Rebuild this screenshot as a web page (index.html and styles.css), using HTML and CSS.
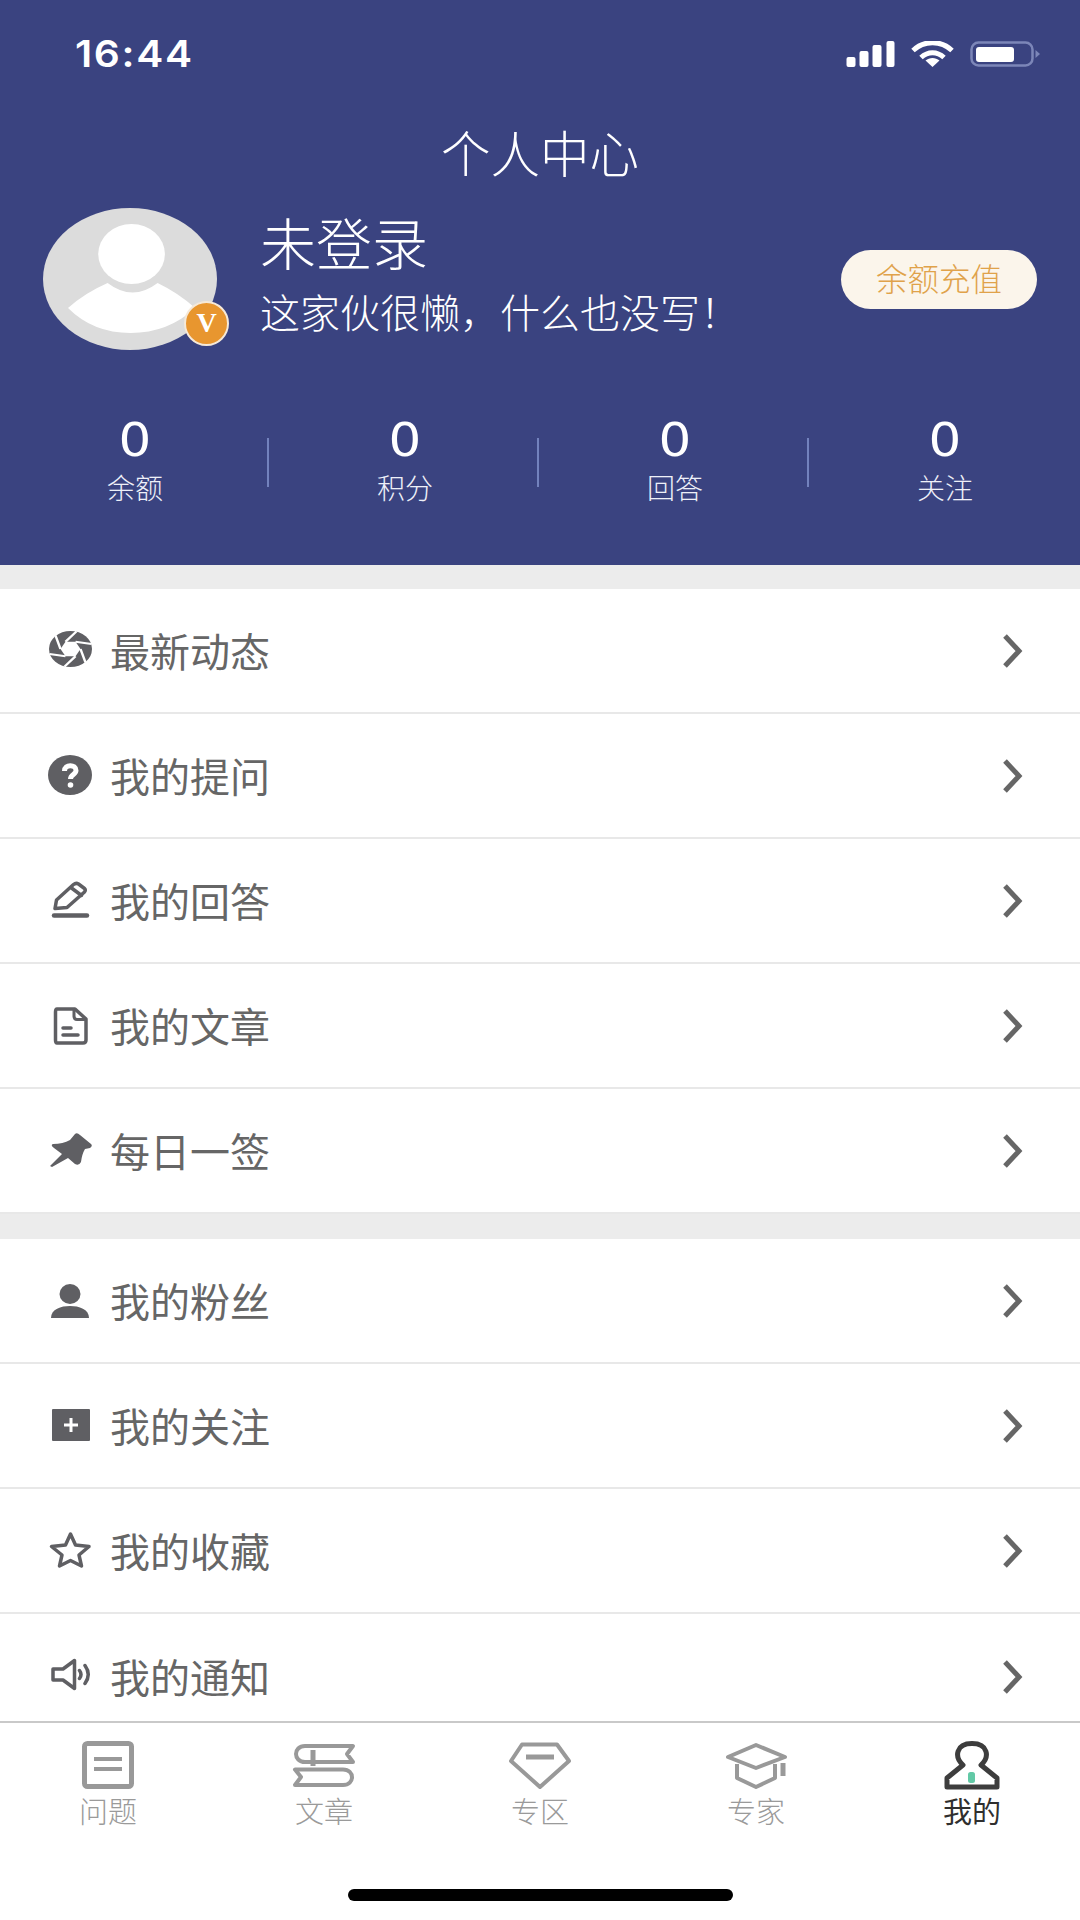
FILE: index.html
```html
<!DOCTYPE html>
<html lang="zh-CN">
<head>
<meta charset="utf-8">
<title>个人中心</title>
<link rel="stylesheet" href="styles.css">
</head>
<body>
<div class="page">
  <header class="hero">
    <div class="status">
      <span class="time">16:44</span>
      <div class="status-icons">
        <svg class="signal" viewBox="0 0 48 26"><rect x="0" y="16" width="9" height="10" rx="2"/><rect x="13" y="10" width="9" height="16" rx="2"/><rect x="26" y="4" width="9" height="22" rx="2"/><rect x="40" y="0" width="8" height="26" rx="2"/></svg>
        <svg class="wifi" viewBox="0 0 43 26"><path d="M2 9.500C13 -1 30 -1 41 9.500" class="wifi-arc"/><path d="M10 16.500C17 10 26 10 33 16.500" class="wifi-arc"/><path d="M21.500 26L14.500 19.500C18.500 16 24.500 16 28.500 19.500Z" class="wifi-dot"/></svg>
        <svg class="battery" viewBox="0 0 70 26"><rect x="1.500" y="1.500" width="61" height="23" rx="7" class="batt-shell"/><rect x="6" y="6" width="38" height="15" rx="3" class="batt-fill"/><path d="M65.500 9L70 13L65.500 17Z" class="batt-nub"/></svg>
      </div>
    </div>
    <h1 class="title">个人中心</h1>
    <div class="profile">
      <div class="avatar">
        <svg class="avatar-img" viewBox="0 0 167 142" preserveAspectRatio="none"><ellipse cx="83.500" cy="71" rx="83.500" ry="71" class="av-bg"/><ellipse cx="85" cy="46" rx="32" ry="30" class="av-fg"/><path d="M24 100Q40 85 62 75Q86 94 110 75Q130 85 146 100Q120 125 84 125Q48 125 24 100Z" class="av-fg"/></svg>
        <span class="badge">V</span>
      </div>
      <div class="who">
        <div class="name">未登录</div>
        <div class="bio">这家伙很懒，什么也没写！</div>
      </div>
      <button class="recharge">余额充值</button>
    </div>
    <div class="stats">
      <div class="stat"><div class="num">0</div><div class="lab">余额</div></div>
      <div class="stat"><div class="num">0</div><div class="lab">积分</div></div>
      <div class="stat"><div class="num">0</div><div class="lab">回答</div></div>
      <div class="stat"><div class="num">0</div><div class="lab">关注</div></div>
    </div>
  </header>

  <main class="list">
    <section class="group">
      <div class="row">
        <svg class="ic" viewBox="0 0 44 44"><g transform="translate(22.500 20) scale(1 .84)"><circle r="21.500" class="fill"/><path d="M10 0L5 8.660L-5 8.660L-10 0L-5 -8.660L5 -8.660Z" class="cut"/><path d="M5 -8.660L21 -6M10 0L15 16M5 8.660L-6 21M-5 8.660L-21 6M-10 0L-15 -16M-5 -8.660L6 -21" class="slit"/></g></svg>
        <span class="label">最新动态</span>
        <svg class="chev" viewBox="0 0 24 36"><path d="M5 3L19 18L5 33"/></svg>
      </div>
      <div class="row">
        <svg class="ic" viewBox="0 0 44 44"><ellipse cx="22" cy="21" rx="22" ry="20" class="fill"/><path d="M16.500 17C16.500 10 28 10 28 16.500C28 20.500 22.500 20.500 22.500 25" class="q"/><circle cx="22.500" cy="31" r="2.800" class="dot"/></svg>
        <span class="label">我的提问</span>
        <svg class="chev" viewBox="0 0 24 36"><path d="M5 3L19 18L5 33"/></svg>
      </div>
      <div class="row">
        <svg class="ic" viewBox="0 0 44 44"><path d="M7 29.500L8.500 21L25.500 5.500Q28 3.500 30.500 5L36.500 9.500Q38 11 36.500 13L19 28.500Z" class="line"/><path d="M23.500 9L33.500 16.500" class="line"/><path d="M6 36.500H39" class="line thick"/></svg>
        <span class="label">我的回答</span>
        <svg class="chev" viewBox="0 0 24 36"><path d="M5 3L19 18L5 33"/></svg>
      </div>
      <div class="row">
        <svg class="ic" viewBox="0 0 44 44"><path d="M9 5H27L38 15V36Q38 39 35 39H9Q7.500 39 7.500 36V8Q7.500 5 9 5Z" class="line"/><path d="M26 6V12Q26 15.500 29 15.500H37" class="line thin"/><path d="M15 24H23M15 31H30" class="line"/></svg>
        <span class="label">我的文章</span>
        <svg class="chev" viewBox="0 0 24 36"><path d="M5 3L19 18L5 33"/></svg>
      </div>
      <div class="row">
        <svg class="ic" viewBox="0 0 44 44"><path d="M5 15Q15 15 22 11L27 5Q29 3 32 6L43 15Q45 17 42 19L37 20Q34 25 33 33Q31 37 27 35L20 29L4 38L2 37L14 25L6 19Q2 16 5 15Z" class="fill"/></svg>
        <span class="label">每日一签</span>
        <svg class="chev" viewBox="0 0 24 36"><path d="M5 3L19 18L5 33"/></svg>
      </div>
    </section>
    <section class="group group-next">
      <div class="row">
        <svg class="ic" viewBox="0 0 44 44"><ellipse cx="22" cy="15" rx="10.500" ry="10" class="fill"/><path d="M3 39C3 30 13 27 22 27C31 27 41 30 41 39Z" class="fill"/></svg>
        <span class="label">我的粉丝</span>
        <svg class="chev" viewBox="0 0 24 36"><path d="M5 3L19 18L5 33"/></svg>
      </div>
      <div class="row">
        <svg class="ic" viewBox="0 0 44 44"><rect x="4" y="5" width="38" height="32" rx="1" class="fill"/><path d="M23 14V28M16 21H30" class="plus"/></svg>
        <span class="label">我的关注</span>
        <svg class="chev" viewBox="0 0 24 36"><path d="M5 3L19 18L5 33"/></svg>
      </div>
      <div class="row">
        <svg class="ic" viewBox="0 0 44 44"><path d="M22.500 5L27.500 16L41 17.500L31 26L33.500 37L22.500 31.500L11.500 37L14 26L3.500 17.500L17.500 16Z" class="line"/></svg>
        <span class="label">我的收藏</span>
        <svg class="chev" viewBox="0 0 24 36"><path d="M5 3L19 18L5 33"/></svg>
      </div>
      <div class="row">
        <svg class="ic" viewBox="0 0 44 44"><path d="M5 14H15L26.500 5.500V33.500L15 25H5Z" class="line"/><path d="M31.500 15.500Q34.500 19.500 31.500 23.500M37 10.500Q43.500 19.500 37 28.500" class="line"/></svg>
        <span class="label">我的通知</span>
        <svg class="chev" viewBox="0 0 24 36"><path d="M5 3L19 18L5 33"/></svg>
      </div>
    </section>
  </main>

  <footer class="tabbar">
    <nav class="tabs">
      <div class="tab">
        <svg class="tab-ic" viewBox="0 0 72 52"><rect x="12.500" y="3.500" width="47" height="43" rx="3" class="ts"/><path d="M22 19H50M22 29H50" class="ts thin"/></svg>
        <span>问题</span>
      </div>
      <div class="tab">
        <svg class="tab-ic" viewBox="0 0 72 52"><path d="M65 6H17C5 6 5 22 17 22H65L59 14Z" class="ts thin"/><path d="M7 29.500H55C67 29.500 67 45 55 45H7L13 37Z" class="ts thin"/><path d="M25 10V26" class="ts"/></svg>
        <span>文章</span>
      </div>
      <div class="tab">
        <svg class="tab-ic" viewBox="0 0 72 52"><path d="M18 4.500H53L65 21L36 47L7 21Z" class="ts thin"/><path d="M22 17H50" class="ts"/></svg>
        <span>专区</span>
      </div>
      <div class="tab">
        <svg class="tab-ic" viewBox="0 0 72 52"><path d="M36 5L65 17L36 28L8 17Z" class="ts thin"/><path d="M17 24V38L36 47L55 38V24" class="ts thin"/><path d="M63 23V36" class="ts"/></svg>
        <span>专家</span>
      </div>
      <div class="tab tab-on">
        <svg class="tab-ic" viewBox="0 0 72 52"><path d="M27 25C18 17 20 3.500 36 3.500C52 3.500 54 17 45 25L61 38V47H11V38Z" class="ts-on"/><rect x="32" y="32" width="7" height="11" rx="2.500" class="pill"/></svg>
        <span>我的</span>
      </div>
    </nav>
    <div class="home"></div>
  </footer>
</div>
</body>
</html>
```
FILE: styles.css
```css
* { box-sizing: border-box; margin: 0; padding: 0; }
html, body { width: 1080px; height: 1920px; overflow: hidden; background: #fff; }
body { font-family: "Noto Sans CJK SC", "Noto Sans", sans-serif; }

.page { width: 1080px; height: 1920px; display: flex; flex-direction: column; background: #fff; overflow: hidden; }

.hero { height: 565px; flex: none; background: #3a4380; color: #fff; display: flex; flex-direction: column; }

.status { height: 108px; display: flex; align-items: center; justify-content: space-between; padding: 0 40px 0 75px; }
.time { display: inline-block; transform: scaleX(1.1); transform-origin: left center; font-family: Inter, "Liberation Sans", sans-serif; font-weight: 600; font-size: 37px; letter-spacing: 1.500px; line-height: 44px; }
.status-icons { display: flex; align-items: center; gap: 16px; }
.signal { width: 49px; height: 26px; fill: #fff; }
.wifi { width: 43px; height: 26px; }
.wifi-arc { fill: none; stroke: #fff; stroke-width: 5px; }
.wifi-dot { fill: #fff; }
.battery { width: 70px; height: 26px; }
.batt-shell { fill: none; stroke: #7c86b8; stroke-width: 2.500px; }
.batt-fill { fill: #fff; }
.batt-nub { fill: #7c86b8; }

.title { margin-top: 14px; height: 60px; line-height: 60px; font-size: 49.500px; font-weight: 300; text-align: center; }

.profile { margin-top: 26px; height: 142px; display: flex; align-items: center; padding: 0 43px; }
.avatar { position: relative; width: 174px; height: 142px; flex: none; }
.avatar-img { display: block; width: 174px; height: 142px; }
.av-bg { fill: #dcdcdc; }
.av-fg { fill: #fff; }
.badge { position: absolute; left: 141px; top: 93px; width: 45px; height: 45px; border-radius: 50%; background: #e8962f; border: 2px solid #f6e9d8; color: #fff; font-family: "Liberation Serif", serif; font-weight: 700; font-size: 28px; line-height: 39px; text-align: center; }

.who { margin-left: 43px; flex: 1; display: flex; flex-direction: column; gap: 12px; padding-bottom: 16px; }
.name { font-size: 56px; font-weight: 300; line-height: 68px; }
.bio { font-size: 40px; font-weight: 300; line-height: 48px; white-space: nowrap; }
.recharge { width: 196px; height: 59px; border: 0; border-radius: 30px; background: #fbf5eb; color: #e0a24a; font-family: inherit; font-size: 31.500px; font-weight: 300; flex: none; padding-bottom: 4px; }

.stats { margin-top: 65px; display: grid; grid-template-columns: repeat(4, 270px); }
.stat { position: relative; text-align: center; }
.stat::after { content: ""; position: absolute; right: 1px; top: 23px; width: 2px; height: 49px; background: #7382bd; }
.stat:last-child::after { display: none; }
.num { transform: scaleX(1.12); font-family: "DejaVu Sans", Inter, sans-serif; font-size: 46px; font-weight: 400; line-height: 50px; }
.lab { margin-top: 4px; font-size: 28px; font-weight: 300; line-height: 36px; color: #eef0f8; }

.list { flex: 1; min-height: 0; overflow: hidden; background: #ececec; padding-top: 24px; }
.group { background: #fff; }
.group-next { margin-top: 25px; }
.row { height: 125px; display: flex; align-items: center; padding: 0 56px 0 48px; border-bottom: 2px solid #e8e8e8; }
.group-next .row:last-child { border-bottom: 0; }
.ic { width: 44px; height: 44px; flex: none; }
.label { margin-left: 18px; flex: 1; font-size: 40px; line-height: 50px; padding-bottom: 2px; font-weight: 400; color: #666; }
.chev { width: 24px; height: 36px; flex: none; fill: none; stroke: #666; stroke-width: 5px; }

.fill { fill: #5f5f63; }
.cut { fill: #fff; }
.slit { fill: none; stroke: #fff; stroke-width: 2.500px; }
.q { fill: none; stroke: #fff; stroke-width: 5px; }
.dot { fill: #fff; }
.line { fill: none; stroke: #5f5f63; stroke-width: 3.500px; stroke-linejoin: round; stroke-linecap: round; }
.thick { stroke-width: 4.500px; }
.thin { stroke-width: 3px; }
.plus { fill: none; stroke: #fff; stroke-width: 3px; }

.tabbar { height: 199px; flex: none; background: #fff; border-top: 2px solid #c9c9c9; display: flex; flex-direction: column; justify-content: space-between; padding-top: 17px; }
.tabs { display: grid; grid-template-columns: repeat(5, 216px); }
.tab { display: flex; flex-direction: column; align-items: center; color: #9a9a9a; font-size: 29px; font-weight: 300; line-height: 36px; }
.tab-on { color: #2f2f2f; font-weight: 400; }
.tab-ic { width: 72px; height: 52px; display: block; }
.ts { fill: none; stroke: #999; stroke-width: 5px; stroke-linejoin: round; }
.ts.thin { stroke-width: 4px; }
.ts-on { fill: none; stroke: #3d3d3d; stroke-width: 5px; stroke-linejoin: round; }
.pill { fill: #62c9a6; }

.home { align-self: center; width: 385px; height: 12px; border-radius: 6px; background: #000; margin-bottom: 19px; }
```
